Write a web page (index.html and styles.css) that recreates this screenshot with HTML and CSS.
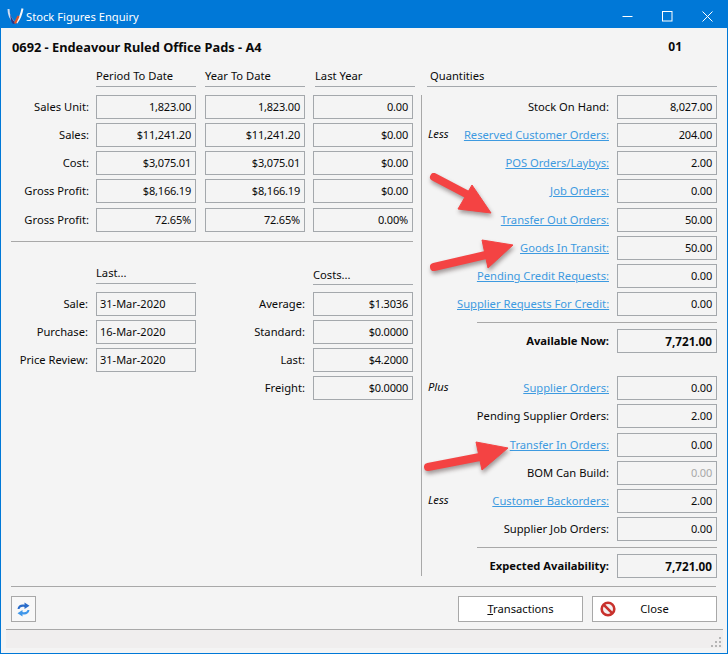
FILE: index.html
```html
<!DOCTYPE html>
<html lang="en">
<head>
    <meta charset="UTF-8">
    <meta name="viewport" content="width=device-width, initial-scale=1.0">
    <title>Stock Figures Enquiry</title>
    <link rel="stylesheet" href="styles.css">
</head>
<body>
<div class="window">
    <div class="titlebar">
        <svg class="app-icon" width="17" height="17" viewBox="0 0 17 17">
            <path d="M1.5 1 C1.5 7 3.5 11 7 14" fill="none" stroke="#cfdcf2" stroke-width="2"/>
            <path d="M15.5 0.5 C14.5 6 12.5 11 9.5 15" fill="none" stroke="#f6f6f6" stroke-width="2"/>
            <path d="M3.5 6 C4.5 11 7 13.5 9.5 15 L6 16 C4 14 3 10 3.5 6 Z" fill="#26388c"/>
            <path d="M10.5 7.5 L12.5 8.5 L9 16 L7 15 Z" fill="#d9542b"/>
        </svg>
        <span class="title-text">Stock Figures Enquiry</span>
        <div class="win-controls">
            <svg width="11" height="11" viewBox="0 0 11 11"><path d="M0.5 5.5 H10.5" stroke="#fff"/></svg>
            <svg width="11" height="11" viewBox="0 0 11 11"><rect x="0.5" y="0.5" width="9.5" height="9.5" fill="none" stroke="#fff"/></svg>
            <svg width="11" height="11" viewBox="0 0 11 11"><path d="M0.5 0.5 L10.5 10.5 M10.5 0.5 L0.5 10.5" stroke="#fff" fill="none"/></svg>
        </div>
    </div>

    <div class="content">
        <div class="heading">
            <span>0692 - Endeavour Ruled Office Pads - A4</span>
            <span class="heading-code">01</span>
        </div>

        <div class="panels">
            <div class="left-panel">
                <div class="figures">
                    <div></div>
                    <div class="col-head">Period To Date</div>
                    <div class="col-head">Year To Date</div>
                    <div class="col-head col-head-last">Last Year</div>

                    <div class="label">Sales Unit:</div>
                    <div class="box">1,823.00</div>
                    <div class="box">1,823.00</div>
                    <div class="box">0.00</div>

                    <div class="label">Sales:</div>
                    <div class="box">$11,241.20</div>
                    <div class="box">$11,241.20</div>
                    <div class="box">$0.00</div>

                    <div class="label">Cost:</div>
                    <div class="box">$3,075.01</div>
                    <div class="box">$3,075.01</div>
                    <div class="box">$0.00</div>

                    <div class="label">Gross Profit:</div>
                    <div class="box">$8,166.19</div>
                    <div class="box">$8,166.19</div>
                    <div class="box">$0.00</div>

                    <div class="label nudge">Gross Profit:</div>
                    <div class="box nudge">72.65%</div>
                    <div class="box nudge">72.65%</div>
                    <div class="box nudge">0.00%</div>
                </div>

                <hr class="rule rule-left">

                <div class="lower">
                    <div class="dates">
                        <div></div>
                        <div class="col-head">Last...</div>
                        <div class="label">Sale:</div>
                        <div class="box box-date">31-Mar-2020</div>
                        <div class="label">Purchase:</div>
                        <div class="box box-date">16-Mar-2020</div>
                        <div class="label">Price Review:</div>
                        <div class="box box-date">31-Mar-2020</div>
                    </div>
                    <div class="costs">
                        <div></div>
                        <div class="col-head col-head-costs">Costs...</div>
                        <div class="label">Average:</div>
                        <div class="box">$1.3036</div>
                        <div class="label">Standard:</div>
                        <div class="box">$0.0000</div>
                        <div class="label">Last:</div>
                        <div class="box">$4.2000</div>
                        <div class="label">Freight:</div>
                        <div class="box">$0.0000</div>
                    </div>
                </div>
            </div>

            <div class="right-panel">
                <div class="col-head col-head-qty">Quantities</div>
                <div class="quantities">
                    <div class="qty-row"><span></span><span class="label">Stock On Hand:</span><div class="box">8,027.00</div></div>
                    <div class="qty-row"><em>Less</em><span class="label"><a href="#">Reserved Customer Orders:</a></span><div class="box">204.00</div></div>
                    <div class="qty-row"><span></span><span class="label"><a href="#">POS Orders/Laybys:</a></span><div class="box">2.00</div></div>
                    <div class="qty-row"><span></span><span class="label"><a href="#">Job Orders:</a></span><div class="box">0.00</div></div>
                    <div class="qty-row qty-nudge"><span></span><span class="label"><a href="#">Transfer Out Orders:</a></span><div class="box">50.00</div></div>
                    <div class="qty-row"><span></span><span class="label"><a href="#">Goods In Transit:</a></span><div class="box">50.00</div></div>
                    <div class="qty-row"><span></span><span class="label"><a href="#">Pending Credit Requests:</a></span><div class="box">0.00</div></div>
                    <div class="qty-row"><span></span><span class="label"><a href="#">Supplier Requests For Credit:</a></span><div class="box">0.00</div></div>
                    <hr class="rule rule-sum">
                    <div class="qty-row total"><span></span><span class="label">Available Now:</span><div class="box">7,721.00</div></div>
                    <div class="qty-row plus-start"><em>Plus</em><span class="label"><a href="#">Supplier Orders:</a></span><div class="box">0.00</div></div>
                    <div class="qty-row"><span></span><span class="label">Pending Supplier Orders:</span><div class="box">2.00</div></div>
                    <div class="qty-row qty-nudge"><span></span><span class="label"><a href="#">Transfer In Orders:</a></span><div class="box">0.00</div></div>
                    <div class="qty-row"><span></span><span class="label">BOM Can Build:</span><div class="box box-muted">0.00</div></div>
                    <div class="qty-row"><em>Less</em><span class="label"><a href="#">Customer Backorders:</a></span><div class="box">2.00</div></div>
                    <div class="qty-row"><span></span><span class="label">Supplier Job Orders:</span><div class="box">0.00</div></div>
                    <hr class="rule rule-sum">
                    <div class="qty-row total"><span></span><span class="label">Expected Availability:</span><div class="box">7,721.00</div></div>
                </div>
            </div>
        </div>

        <hr class="rule rule-footer">

        <div class="footer">
            <button class="btn btn-refresh" type="button" aria-label="Refresh">
                <svg width="13" height="15" viewBox="0 0 13 15">
                    <path d="M0.5 7 C1 3.5 4 2 7.5 2.8 L7.5 0.5 L12.5 3.8 L7.5 7 L7.5 5 C5 4.5 3.2 5 2.5 7 Z" fill="#2a6cca"/>
                    <path d="M12.5 8 C12 11.5 9 13 5.5 12.2 L5.5 14.5 L0.5 11.2 L5.5 8 L5.5 10 C8 10.5 9.8 10 10.5 8 Z" fill="#3f97ea"/>
                </svg>
            </button>
            <div class="footer-right">
                <button class="btn btn-wide" type="button"><u>T</u>ransactions</button>
                <button class="btn btn-wide btn-close" type="button">
                    <svg width="16" height="16" viewBox="0 0 16 16">
                        <circle cx="8" cy="8" r="6.3" fill="#f4f0f0" stroke="#c8312c" stroke-width="2.6"/>
                        <path d="M3.8 3.8 L12.2 12.2" stroke="#c8312c" stroke-width="2.6"/>
                    </svg>
                    <span>Close</span>
                </button>
            </div>
        </div>
    </div>

    <div class="statusbar">
        <svg class="grip" width="11" height="11" viewBox="0 0 11 11" fill="#b5b5b5">
            <rect x="8" y="0" width="2" height="2"/>
            <rect x="4" y="4" width="2" height="2"/><rect x="8" y="4" width="2" height="2"/>
            <rect x="0" y="8" width="2" height="2"/><rect x="4" y="8" width="2" height="2"/><rect x="8" y="8" width="2" height="2"/>
        </svg>
    </div>

    <!-- annotation arrows drawn over the dialog -->
    <svg class="arrows" width="728" height="654" viewBox="0 0 728 654">
        <g fill="#f44343" stroke="#f44343">
            <line x1="434" y1="177" x2="474" y2="198" stroke-width="8" stroke-linecap="round"/>
            <polygon points="472,185 458,209 491,213" stroke-width="1"/>
            <line x1="434" y1="267" x2="490" y2="254" stroke-width="8" stroke-linecap="round"/>
            <polygon points="482,240 488,268 513,245" stroke-width="1"/>
            <line x1="428" y1="467" x2="485" y2="456" stroke-width="8" stroke-linecap="round"/>
            <polygon points="476,442 482,470 508,448" stroke-width="1"/>
        </g>
    </svg>
</div>
</body>
</html>
```

FILE: styles.css
```css
* {
    box-sizing: border-box;
}
body {
    margin: 0;
    font-family: "Noto Sans", sans-serif;
    font-size: 11.2px;
    color: #0a0a0a;
}
.window {
    position: relative;
    width: 728px;
    height: 654px;
    display: flex;
    flex-direction: column;
    background-color: #f4f4f4;
    border: 1px solid #0078d7;
    border-top: none;
    overflow: hidden;
}

/* title bar */
.titlebar {
    height: 28px;
    flex: none;
    display: flex;
    align-items: center;
    background-color: #0078d7;
    color: #fff;
    padding: 4px 0 0 6px;
}
.app-icon {
    margin-right: 2px;
}
.win-controls {
    margin-left: auto;
    display: flex;
    gap: 29px;
    padding-right: 14px;
}

/* main area */
.content {
    flex: 1;
    padding: 0 10px;
    min-height: 0;
}
.heading {
    display: flex;
    justify-content: space-between;
    height: 41px;
    padding: 10px 35px 0 1px;
    font-size: 12.8px;
    font-weight: bold;
}
.heading-code {
    font-size: 12px;
}
.panels {
    display: flex;
    height: 517px;
}
.left-panel {
    width: 402px;
}
.right-panel {
    width: 290px;
    margin-left: 14px;
    flex: none;
}
.box {
    height: 24px;
    border: 1px solid #a4a8ac;
    font-size: 11px;
    letter-spacing: -0.2px;
    line-height: 22px;
    padding: 0 4px;
    text-align: right;
    white-space: nowrap;
}
.box-date {
    text-align: left;
    padding-left: 3px;
    letter-spacing: 0;
}
.box-muted {
    color: #a8a8a8;
}
.label {
    line-height: 24px;
    text-align: right;
    padding-right: 7px;
    white-space: nowrap;
}
.col-head {
    border-bottom: 1px solid #a4a8ac;
    line-height: 14px;
}
.col-head-last {
    margin: 0 -2px 0 2px;
}
.nudge {
    margin-top: 1px;
}
.figures {
    display: grid;
    grid-template-columns: 77px 100px 101px 100px;
    column-gap: 8px;
    row-gap: 4px;
    grid-template-rows: 22px repeat(5, 24px);
}
.figures > :nth-child(4n+3) {
    margin-left: 1px;
}
.figures .label {
    margin-right: -8px;
}
.figures .col-head {
    height: 18px;
}
.rule {
    border: none;
    border-top: 1px solid #a8a8a8;
    margin: 0;
}
.rule-left {
    margin-top: 10px;
}
.lower {
    display: flex;
    justify-content: space-between;
    margin-top: 22px;
}
.dates {
    display: grid;
    grid-template-columns: 85px 100px;
    grid-template-rows: 24px repeat(3, 24px);
    row-gap: 4px;
}
.costs {
    display: grid;
    grid-template-columns: 100px 100px;
    grid-template-rows: 24px repeat(4, 24px);
    row-gap: 4px;
}
.lower .col-head {
    height: 20px;
    padding-top: 2px;
}
.lower .col-head-costs {
    height: 21px;
    padding-top: 4px;
}
.lower .label {
    padding-right: 8px;
}

/* quantities column */
.col-head-qty {
    height: 18px;
    padding-left: 3px;
    margin-bottom: 8px;
}
.quantities {
    border-left: 1px solid #a8a8a8;
    margin-left: -6px;
    padding-left: 5px;
    height: 481px;
}
.qty-row {
    display: grid;
    grid-template-columns: 30px 160px 100px;
    height: 24px;
    margin-bottom: 4px;
}
.qty-nudge {
    margin-top: 5px;
}
.qty-row em {
    line-height: 22px;
    padding-left: 1px;
}
.qty-row .label {
    padding-right: 8px;
}
.qty-row a {
    color: #3d9ae0;
}
.rule-sum {
    margin: 6px 0 6px 50px;
}
.total {
    font-weight: bold;
}
.total .box {
    font-size: 11.7px;
    letter-spacing: 0;
}
.plus-start {
    margin-top: 23px;
}

/* footer */
.rule-footer {
    margin-right: 1px;
}
.footer {
    display: flex;
    justify-content: space-between;
    margin-top: 9px;
}
.footer-right {
    display: flex;
    gap: 9px;
}
.btn {
    height: 26px;
    background-color: #fff;
    border: 1px solid #a8a8a8;
    font-family: inherit;
    font-size: 11.2px;
    color: #0a0a0a;
    padding: 0 0 2px;
}
.btn-refresh {
    width: 25px;
    display: flex;
    align-items: center;
    justify-content: center;
    background-color: #f8f8f8;
    padding: 0;
}
.btn-wide {
    width: 125px;
}
.btn-close {
    display: grid;
    grid-template-columns: 22px 1fr 22px;
    align-items: center;
    justify-items: center;
    padding: 0 4px;
}
.btn-close span {
    grid-column: 2;
    padding-bottom: 2px;
}

/* status bar */
.statusbar {
    flex: none;
    height: 19px;
    margin: 0 4px 5px 5px;
    border-top: 1px solid #a8a8a8;
    background-color: #f0eeee;
    display: flex;
    justify-content: flex-end;
    align-items: flex-end;
    padding-right: 1px;
}

/* red annotation arrows */
.arrows {
    position: absolute;
    left: -1px;
    top: 0;
    filter: drop-shadow(1px 3px 2px rgba(60, 40, 40, 0.45));
    pointer-events: none;
}
```
